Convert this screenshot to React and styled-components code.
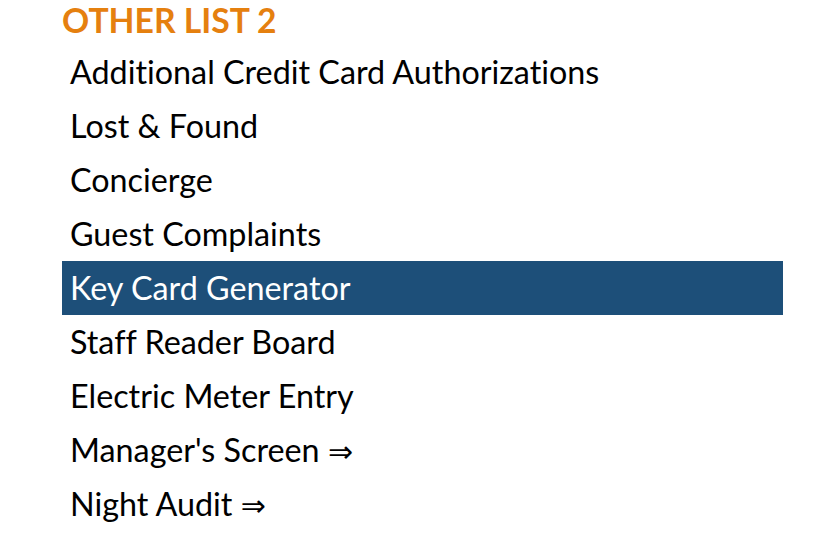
import React from 'react';
import styled, { createGlobalStyle } from 'styled-components';

const GlobalStyle = createGlobalStyle`
  body {
    margin: 0;
    background: #ffffff;
    font-family: Lato, "Open Sans", sans-serif;
    font-variant-ligatures: none;
  }
`;

const Panel = styled.div`
  width: 721px;
  margin-left: 62px;
`;

const Title = styled.h2`
  margin: 0;
  height: 45px;
  line-height: 40px;
  font-size: 33.7px;
  font-weight: 700;
  color: #e5800f;
`;

const List = styled.ul`
  list-style: none;
  margin: 0;
  padding: 0;
`;

const Item = styled.li`
  height: 54px;
  line-height: 54px;
  padding-left: 8px;
  font-size: 32.3px;
  color: ${(p) => (p.active ? '#ffffff' : '#000000')};
  background: ${(p) => (p.active ? '#1d4f79' : 'transparent')};
  white-space: nowrap;
`;

const Arrow = styled.span`
  font-family: "DejaVu Sans", sans-serif;
  font-size: 30px;
`;

const items = [
  { label: 'Additional Credit Card Authorizations' },
  { label: 'Lost & Found' },
  { label: 'Concierge' },
  { label: 'Guest Complaints' },
  { label: 'Key Card Generator', active: true },
  { label: 'Staff Reader Board' },
  { label: 'Electric Meter Entry' },
  { label: "Manager's Screen", sub: true },
  { label: 'Night Audit', sub: true },
];

export default function App() {
  return (
    <>
      <GlobalStyle />
      <Panel>
        <Title>OTHER LIST 2</Title>
        <List>
          {items.map((it) => (
            <Item key={it.label} active={it.active}>
              {it.label}
              {it.sub && <> <Arrow>{'\u21D2'}</Arrow></>}
            </Item>
          ))}
        </List>
      </Panel>
    </>
  );
}
